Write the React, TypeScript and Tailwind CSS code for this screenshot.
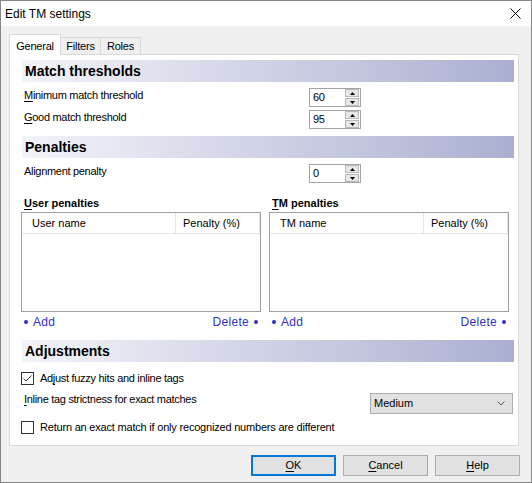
import React from 'react';

const font = "font-['Liberation_Sans',Arial,sans-serif]";

const Banner: React.FC<{ title: string; className?: string }> = ({ title, className }) => (
  <div
    className={`flex h-[22px] items-center bg-[linear-gradient(to_right,#f3f4f9,#abb0d1)] pl-[3px] text-[14px] font-bold text-black ${className ?? ''}`}
  >
    {title}
  </div>
);

const Spin: React.FC<{ value: string }> = ({ value }) => (
  <div className="flex h-[19px] w-[52px] border border-[#a5a5a5] bg-white">
    <div className="flex-1 pl-[3px] text-[11px] leading-[17px] text-black">{value}</div>
    <div className="mr-[1px] flex w-[14px] flex-col gap-[1px]">
      <div className="flex flex-1 items-center justify-center border border-[#b9b9b9] bg-[#e7e7e7]">
        <svg width="5" height="3" viewBox="0 0 5 3">
          <path d="M0 3 L2.5 0 L5 3 Z" fill="#000" />
        </svg>
      </div>
      <div className="flex flex-1 items-center justify-center border border-[#b9b9b9] bg-[#e7e7e7]">
        <svg width="5" height="3" viewBox="0 0 5 3">
          <path d="M0 0 L2.5 3 L5 0 Z" fill="#000" />
        </svg>
      </div>
    </div>
  </div>
);

const Mn: React.FC<{ children: React.ReactNode }> = ({ children }) => <span className="underline underline-offset-[2px]">{children}</span>;

const Checkbox: React.FC<{ checked?: boolean }> = ({ checked }) => (
  <div className="flex h-[13px] w-[13px] shrink-0 items-center justify-center border border-[#333] bg-white">
    {checked && (
      <svg width="11" height="11" viewBox="0 0 11 11">
        <path d="M1.5 5.5 L4 8 L9.5 2.5" fill="none" stroke="#333" strokeWidth="1" />
      </svg>
    )}
  </div>
);

const PenaltyList: React.FC<{ heading: React.ReactNode; col: string }> = ({ heading, col }) => (
  <div className="flex flex-col">
    <div className="h-[14px] pl-[3px] text-[11px] font-bold leading-[14px]">{heading}</div>
    <div className="mt-[2px] h-[100px] border border-[#a0a0a0] bg-white">
      <div className="flex h-[21px] border-b border-[#e5e5e5] text-[11px] leading-[20px]">
        <div className="w-[154px] border-r border-[#e5e5e5] pl-[10px]">{col}</div>
        <div className="w-[84px] border-r border-[#e5e5e5] pl-[7px]">Penalty (%)</div>
      </div>
    </div>
    <div className="mt-[3px] flex h-[14px] items-center justify-between px-[3px] text-[12px] tracking-[0.3px] text-[#3030c4]">
      <div className="flex items-center gap-[5px]">
        <span className="h-[4px] w-[4px] rounded-full bg-[#3030c4]" />
        <span>Add</span>
      </div>
      <div className="flex items-center gap-[5px]">
        <span>Delete</span>
        <span className="h-[4px] w-[4px] rounded-full bg-[#3030c4]" />
      </div>
    </div>
  </div>
);

const Button: React.FC<{ children: React.ReactNode; primary?: boolean }> = ({ children, primary }) => (
  <div
    className={`flex h-[21px] w-[85px] items-center justify-center bg-[#e1e1e1] text-[11px] text-black ${
      primary ? 'border-2 border-[#0078d7]' : 'border border-[#adadad]'
    }`}
  >
    {children}
  </div>
);

export default function App() {
  return (
    <div className={`${font} flex h-[483px] w-[532px] flex-col border border-[#858585] bg-[#f0f0f0] text-black`}>
      {/* title bar */}
      <div className="flex h-[25px] shrink-0 items-center justify-between bg-white pl-[4px] pr-[10px]">
        <span className="text-[12px]">Edit TM settings</span>
        <svg width="11" height="11" viewBox="0 0 11 11">
          <path d="M0.5 0.5 L10.5 10.5 M10.5 0.5 L0.5 10.5" stroke="#000" strokeWidth="1" />
        </svg>
      </div>

      {/* tabs */}
      <div className="ml-[8px] mt-[8px] flex h-[20px] items-end text-[11px] tracking-[-0.2px]">
        <div className="relative z-10 flex h-[21px] w-[52px] translate-y-[1px] items-start justify-center border border-b-0 border-[#d9d9d9] bg-white pt-[3px]">
          General
        </div>
        <div className="flex h-[17px] w-[40px] items-center justify-center border border-b-0 border-l-0 border-[#d9d9d9]">
          Filters
        </div>
        <div className="flex h-[17px] w-[40px] items-center justify-center border border-b-0 border-l-0 border-[#d9d9d9]">
          Roles
        </div>
      </div>

      {/* panel */}
      <div className="ml-[8px] flex h-[392px] w-[510px] flex-col border border-[#d9d9d9] bg-white pl-[12px] pr-[4px] pt-[5px] text-[11px] tracking-[-0.3px]">
        <Banner title="Match thresholds" className="tracking-normal" />
        <div className="mt-[6px] flex items-start">
          <div className="w-[287px] pl-[2px] leading-[14px]">
            <Mn>M</Mn>inimum match threshold
          </div>
          <Spin value="60" />
        </div>
        <div className="mt-[3px] flex items-start">
          <div className="w-[287px] pl-[2px] leading-[14px]">
            <Mn>G</Mn>ood match threshold
          </div>
          <Spin value="95" />
        </div>

        <Banner title="Penalties" className="mt-[7px] tracking-normal" />
        <div className="mt-[6px] flex items-start">
          <div className="w-[287px] pl-[2px] leading-[14px]">Alignment penalty</div>
          <Spin value="0" />
        </div>

        <div className="-ml-[1px] mt-[13px] grid grid-cols-[240px_240px] gap-[8px] tracking-normal">
          <PenaltyList heading={<><Mn>U</Mn>ser penalties</>} col="User name" />
          <PenaltyList heading={<><Mn>T</Mn>M penalties</>} col="TM name" />
        </div>

        <Banner title="Adjustments" className="mt-[11px] tracking-normal" />
        <div className="-ml-[1px] mt-[10px] flex h-[13px] items-center gap-[6px]">
          <Checkbox checked />
          <span>
            Ad<Mn>j</Mn>ust fuzzy hits and inline tags
          </span>
        </div>
        <div className="mt-[8px] flex items-start justify-between pr-[1px]">
          <div className="pl-[2px] leading-[12px]">
            <Mn>I</Mn>nline tag strictness for exact matches
          </div>
          <div className="flex h-[21px] w-[143px] items-center justify-between border border-[#adadad] bg-[#e1e1e1] pl-[3px] pr-[7px] tracking-normal">
            <span>Medium</span>
            <svg width="8" height="5" viewBox="0 0 8 5">
              <path d="M0.5 0.5 L4 4 L7.5 0.5" fill="none" stroke="#555" strokeWidth="1" />
            </svg>
          </div>
        </div>
        <div className="-ml-[1px] mt-[7px] flex h-[13px] items-center gap-[6px]">
          <Checkbox />
          <span className="tracking-[-0.2px]">Return an exact match if only recognized numbers are different</span>
        </div>
      </div>

      {/* buttons */}
      <div className="mr-[11px] mt-[9px] flex justify-end gap-[7px]">
        <Button primary>
          <Mn>O</Mn>K
        </Button>
        <Button>
          <Mn>C</Mn>ancel
        </Button>
        <Button>
          <Mn>H</Mn>elp
        </Button>
      </div>
    </div>
  );
}
